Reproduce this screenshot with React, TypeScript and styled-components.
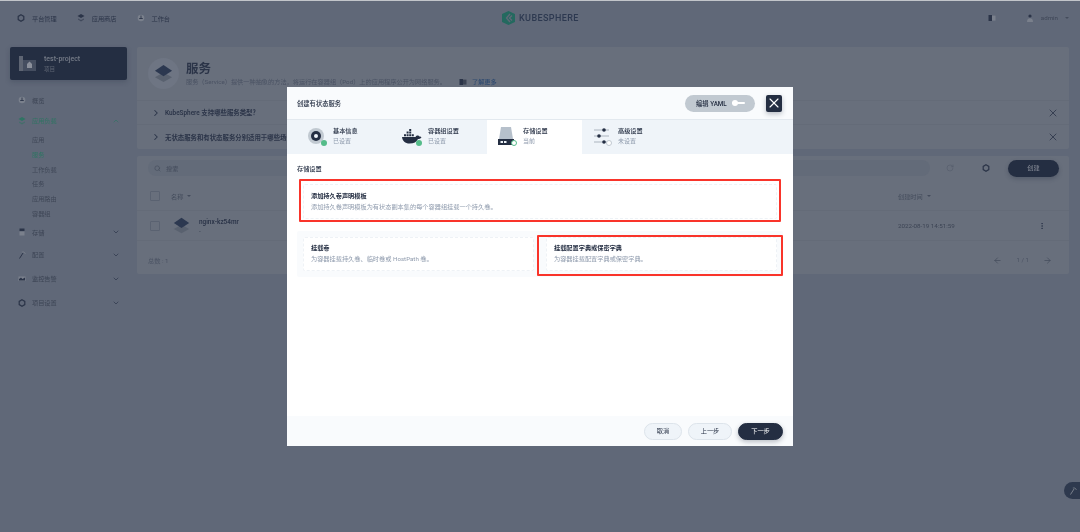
import React from 'react';
import styled, { createGlobalStyle } from 'styled-components';
import { ChevronDown, ChevronRight, ChevronUp, Search, RotateCw, X, ArrowLeft, ArrowRight, MoreVertical } from 'lucide-react';

const dimText = '#2b3448';
const navy = '#242e42';

const GlobalStyle = createGlobalStyle`
  html, body { margin: 0; padding: 0; }
  body {
    font-family: Roboto, "Noto Sans CJK SC", sans-serif;
    background: #606878;
    overflow: hidden;
  }
`;

const Page = styled.div`
  position: relative;
  width: 1080px;
  height: 532px;
  overflow: hidden;
  background: #606878;
  border-top: 1px solid #c2c5ca;
  box-sizing: border-box;
  filter: blur(0.4px);
`;

const TopBar = styled.div`
  display: flex;
  align-items: center;
  height: 36px;
  padding: 0 11px 2px 17px;
  box-sizing: border-box;
  font-size: 6.2px;
  color: ${dimText};
`;

const TopItem = styled.div<{ $gap?: number }>`
  display: flex;
  align-items: center;
  gap: 7px;
  margin-right: ${p => p.$gap ?? 20}px;
`;

const LogoBlock = styled.div`
  position: absolute;
  left: 502px;
  top: 10px;
  display: flex;
  align-items: center;
  gap: 4px;
  font-size: 9px;
  font-weight: 500;
  letter-spacing: 0.4px;
  color: #2d3950;
`;

const TopRight = styled.div`
  margin-left: auto;
  display: flex;
  align-items: center;
  color: #3f4757;
`;

const Layout = styled.div`
  display: flex;
  gap: 10px;
  padding: 10px 11px 0 10px;
`;

const Sidebar = styled.aside`
  width: 117px;
  flex: none;
`;

const ProjectCard = styled.div`
  display: flex;
  align-items: center;
  gap: 8px;
  height: 33px;
  padding-left: 9px;
  margin-bottom: 10px;
  background: ${navy};
  border-radius: 2px;
  box-shadow: 0 2px 5px rgba(36, 46, 66, 0.25);
`;

const ProjectName = styled.div`
  font-size: 7px;
  font-weight: 500;
  line-height: 10px;
  color: #767c88;
`;

const ProjectType = styled.div`
  font-size: 5.6px;
  line-height: 10px;
  color: #5e6573;
`;

const NavRow = styled.div<{ $active?: boolean; $height?: number }>`
  display: flex;
  align-items: center;
  gap: 6px;
  height: ${p => p.$height ?? 24}px;
  padding: 0 7px 0 8px;
  font-size: 6.2px;
  color: ${p => (p.$active ? '#2f7463' : '#3c4454')};
`;

const NavOpen = styled(ChevronDown)`
  margin-left: auto;
`;

const NavClose = styled(ChevronUp)`
  margin-left: auto;
`;

const SubNav = styled.div`
  display: flex;
  flex-direction: column;
  padding: 2px 0 0 22px;
`;

const SubItem = styled.div<{ $active?: boolean }>`
  height: 14.8px;
  line-height: 14.8px;
  font-size: 6.2px;
  color: ${p => (p.$active ? '#2f7463' : '#3f4757')};
`;

const Main = styled.main`
  flex: 1;
  display: flex;
  flex-direction: column;
  gap: 7px;
`;

const Card = styled.section`
  background: #686f7c;
  border-radius: 2px;
`;

const Banner = styled.div`
  display: flex;
  align-items: center;
  gap: 7px;
  height: 54px;
  padding-left: 11px;
  border-bottom: 1px solid #646b78;
  box-sizing: border-box;
`;

const BannerCircle = styled.div`
  display: flex;
  align-items: center;
  justify-content: center;
  width: 31px;
  height: 31px;
  border-radius: 50%;
  background: #6e7583;
`;

const BannerTitle = styled.h1`
  margin: 0 0 2px;
  font-size: 12.5px;
  line-height: 15px;
  font-weight: 600;
  color: ${dimText};
`;

const BannerText = styled.div`
  display: flex;
  align-items: center;
  font-size: 6.2px;
  line-height: 8px;
  color: #4a5263;
`;

const MoreLink = styled.span`
  margin-left: 13px;
  display: flex;
  align-items: center;
  gap: 5px;
  color: #2f4a70;
  font-weight: 500;
`;

const TipRow = styled.div`
  display: flex;
  align-items: center;
  height: 24px;
  padding: 0 10px 0 14px;
  gap: 4px;
  border-bottom: 1px solid #646b78;
  box-sizing: border-box;
  font-size: 6.4px;
  font-weight: 600;
  color: ${dimText};

  &:last-child { border-bottom: none; }
`;

const TipClose = styled(X)`
  margin-left: auto;
`;

const Toolbar = styled.div`
  display: flex;
  align-items: flex-start;
  height: 26px;
  padding: 4px 10px 0 11px;
  box-sizing: border-box;
`;

const SearchBox = styled.div`
  flex: 1;
  display: flex;
  align-items: center;
  gap: 5px;
  height: 16px;
  padding-left: 6px;
  margin-right: 16px;
  border-radius: 8px;
  background: #636b79;
  font-size: 6.2px;
  color: #444c5c;
`;

const ToolIcon = styled.div<{ $gap: number }>`
  display: flex;
  margin: 4px ${p => p.$gap}px 0 0;
`;

const CreateButton = styled.div`
  width: 51px;
  height: 17px;
  line-height: 17px;
  border-radius: 9px;
  text-align: center;
  background: ${navy};
  color: #8c919c;
  font-size: 6.2px;
  box-shadow: 0 2px 4px rgba(36, 46, 66, 0.3);
`;

const TableRow = styled.div<{ $height: number; $head?: boolean }>`
  display: grid;
  grid-template-columns: 21px 1fr 140px 31px;
  align-items: center;
  height: ${p => p.$height}px;
  padding-left: 13px;
  border-bottom: 1px solid #646b78;
  box-sizing: border-box;
  font-size: 6.2px;
  color: ${p => (p.$head ? '#444c5c' : '#3c4454')};
`;

const Check = styled.div`
  width: 8px;
  height: 8px;
  border: 1px solid #5a6271;
  border-radius: 1px;
`;

const SortCell = styled.div`
  display: flex;
  align-items: center;
  gap: 4px;
`;

const Caret = styled.span`
  width: 0;
  height: 0;
  border: 2px solid transparent;
  border-top: 2.5px solid #444c5c;
  border-bottom: none;
`;

const NameCell = styled.div`
  display: flex;
  align-items: center;
  gap: 9px;
  margin-left: 2px;
`;

const RowName = styled.div`
  font-weight: 600;
  font-size: 6.4px;
  line-height: 10px;
  color: ${dimText};
`;

const TableFoot = styled.div`
  display: flex;
  align-items: center;
  justify-content: space-between;
  height: 33px;
  padding: 5px 17px 0 11px;
  box-sizing: border-box;
  font-size: 6.2px;
  color: #4a5263;
`;

const Pager = styled.div`
  display: flex;
  align-items: center;
  gap: 14px;
`;

const Modal = styled.div`
  position: absolute;
  left: 287px;
  top: 86px;
  width: 506px;
  height: 359px;
  display: flex;
  flex-direction: column;
  background: #fff;
  border-radius: 2px;
`;

const ModalHead = styled.div`
  display: flex;
  align-items: center;
  height: 33px;
  padding: 0 11px 0 10px;
  background: #f9fbfd;
  border-bottom: 1px solid #e3e9ef;
  box-sizing: border-box;
  font-size: 6.3px;
  font-weight: 500;
  color: ${navy};
`;

const YamlToggle = styled.div`
  margin-left: auto;
  display: flex;
  align-items: center;
  gap: 3px;
  width: 70px;
  height: 17px;
  padding-left: 11px;
  margin-right: 11px;
  box-sizing: border-box;
  border-radius: 9px;
  background: #c1c9d1;
  font-size: 6.3px;
  color: ${navy};
`;

const ToggleKnob = styled.span`
  position: relative;
  width: 13px;
  height: 2px;
  margin-left: 2px;
  background: #fff;
  border-radius: 1px;

  &::before {
    content: '';
    position: absolute;
    left: 0;
    top: -2px;
    width: 6px;
    height: 6px;
    border-radius: 50%;
    background: #fff;
  }
`;

const CloseButton = styled.div`
  display: flex;
  align-items: center;
  justify-content: center;
  width: 16px;
  height: 17px;
  background: ${navy};
  border-radius: 2px;
  box-shadow: 0 2px 5px rgba(36, 46, 66, 0.3);
`;

const Tabs = styled.div`
  display: flex;
  height: 34px;
  padding-left: 10px;
  background: #eff4f9;
`;

const Tab = styled.div<{ $active?: boolean }>`
  display: flex;
  align-items: center;
  gap: 6px;
  width: 95px;
  padding: 0 0 2px 10px;
  box-sizing: border-box;
  background: ${p => (p.$active ? '#fff' : 'transparent')};
`;

const TabIcon = styled.div`
  position: relative;
  width: 20px;
  height: 20px;
  flex: none;
  margin-top: 2px;
`;

const StatusDot = styled.span<{ $state: 'done' | 'current' | 'todo' }>`
  position: absolute;
  right: 0;
  bottom: 1px;
  width: 6px;
  height: 6px;
  box-sizing: border-box;
  border-radius: 50%;
  background: ${p => (p.$state === 'done' ? '#55bc8a' : '#fff')};
  border: ${p =>
    p.$state === 'done' ? '0' : p.$state === 'current' ? '1px solid #55bc8a' : '1px solid #c1c9d1'};
`;

const TabTitle = styled.div`
  font-size: 6.2px;
  line-height: 10px;
  font-weight: 500;
  color: ${navy};
`;

const TabSub = styled.div`
  font-size: 6px;
  line-height: 10px;
  color: #8f9bad;
`;

const ModalBody = styled.div`
  flex: 1;
  padding: 11px 10px 0;
`;

const SectionTitle = styled.div`
  font-size: 6.2px;
  line-height: 8px;
  font-weight: 500;
  color: ${navy};
  margin-bottom: 11px;
`;

const RedMark = styled.div<{ $inset: string }>`
  position: relative;

  &::after {
    content: '';
    position: absolute;
    inset: ${p => p.$inset};
    border: 2px solid #f9342a;
    border-radius: 1px;
  }
`;

const OptionCard = styled.div<{ $height: number }>`
  display: flex;
  flex-direction: column;
  justify-content: center;
  height: ${p => p.$height}px;
  padding-left: 7px;
  box-sizing: border-box;
  background: #fff;
  border: 1px dashed #eef2f6;
  border-radius: 2px;
`;

const OptionTitle = styled.div`
  font-size: 6.2px;
  line-height: 10.7px;
  font-weight: 600;
  color: ${navy};
`;

const OptionText = styled.div`
  font-size: 6.2px;
  line-height: 10.7px;
  color: #8f9bad;
`;

const FirstOption = styled.div`
  margin: 0 6px;
`;

const OptionGroup = styled.div`
  display: grid;
  grid-template-columns: 1fr 1fr;
  gap: 12px;
  margin-top: 12px;
  padding: 6px;
  background: #f9fbfd;
  border-radius: 2px;
`;

const ModalFoot = styled.div`
  display: flex;
  justify-content: flex-end;
  align-items: center;
  gap: 6px;
  height: 30px;
  padding-right: 10px;
  background: #f9fbfd;
`;

const FootButton = styled.div<{ $width: number; $primary?: boolean }>`
  width: ${p => p.$width}px;
  height: 17px;
  line-height: 15px;
  box-sizing: border-box;
  border-radius: 9px;
  text-align: center;
  font-size: 6.2px;
  color: ${p => (p.$primary ? '#fff' : navy)};
  background: ${p => (p.$primary ? navy : '#eff4f9')};
  border: 1px solid ${p => (p.$primary ? navy : '#dde4eb')};
  box-shadow: ${p => (p.$primary ? '0 2px 5px rgba(36, 46, 66, 0.3)' : 'none')};
`;

const FloatTool = styled.div`
  position: absolute;
  right: -1px;
  top: 481px;
  width: 17px;
  height: 17px;
  display: flex;
  align-items: center;
  justify-content: center;
  border-radius: 9px 0 0 9px;
  background: #2e394e;
`;

const Stack = ({ size = 20 }: { size?: number }) => (
  <svg width={size} height={size} viewBox="0 0 20 20">
    <path d="M10 9 L19 14 L10 19 L1 14 Z" fill="#59616f" />
    <path d="M10 1 L19 7 L10 13 L1 7 Z" fill="#2c3850" />
  </svg>
);

const SmallStack = ({ color }: { color: string }) => (
  <svg width="8" height="8" viewBox="0 0 8 8">
    <path d="M4 0 L7.5 2 L4 4 L.5 2 Z" fill={color} />
    <path d="M1 4.4 L4 6 L7 4.4 V5.6 L4 7.4 L1 5.6 Z" fill={color} opacity=".6" />
  </svg>
);

const Compass = () => (
  <svg width="8" height="8" viewBox="0 0 8 8">
    <circle cx="4" cy="4" r="3.3" fill="#7a808c" />
    <path d="M4 1.5 V4.5 M2.2 4.5 H5.8" stroke="#2b3448" strokeWidth=".9" />
  </svg>
);

const Ring = () => (
  <svg width="8" height="8" viewBox="0 0 8 8">
    <path d="M4 .8 L6.8 2.4 V5.6 L4 7.2 L1.2 5.6 V2.4 Z" fill="none" stroke={dimText} strokeWidth="1.2" />
  </svg>
);

const Book = ({ tone = '#7a808c' }: { tone?: string }) => (
  <svg width="8" height="8" viewBox="0 0 8 8">
    <path d="M.5 1 H4 V7 H.5 Z" fill={dimText} />
    <path d="M4 1.6 H7.5 V6.6 H4 Z" fill={tone} />
  </svg>
);

const UserMark = () => (
  <svg width="8" height="8" viewBox="0 0 8 8">
    <circle cx="4" cy="2" r="1.6" fill={dimText} />
    <path d="M1 8 C1 5 2.5 4.2 4 4.2 C5.5 4.2 7 5 7 8 Z" fill="#7a808c" />
  </svg>
);

const Storage = () => (
  <svg width="8" height="8" viewBox="0 0 8 8">
    <path d="M1.5 .5 H6.5 V3 H1.5 Z" fill={dimText} />
    <path d="M1.5 3.6 H6.5 V7.5 H1.5 Z" fill="#7a808c" />
  </svg>
);

const Tool = ({ color = dimText }: { color?: string }) => (
  <svg width="8" height="8" viewBox="0 0 8 8">
    <path d="M1.5 7.5 L5 2" stroke={color} strokeWidth="1" fill="none" />
    <path d="M3.8 1 H6 L7.5 3" stroke="#7a808c" strokeWidth=".8" fill="none" />
  </svg>
);

const Monitor = () => (
  <svg width="8" height="8" viewBox="0 0 8 8">
    <path d="M.5 1.5 H7.5 V6 H.5 Z" fill="#7a808c" />
    <path d="M1 4 L3 2.5 L4.5 4 L7 2.5 V5.5 H1 Z" fill={dimText} />
  </svg>
);

const Logo = () => (
  <svg width="13" height="14" viewBox="0 0 13 14">
    <path d="M6.5 0 L13 3 V11 L6.5 14 L0 11 V3 Z" fill="#24695f" />
    <path d="M8 3 L4.5 7 L8 11 M10 4.5 L7.5 7 L10 9.5" stroke="#606878" strokeWidth="1.4" fill="none" />
  </svg>
);

const ProjectIcon = () => (
  <svg width="17" height="17" viewBox="0 0 17 17">
    <path d="M0 1 H4 V16 H0 Z" fill="#5e6573" />
    <path d="M4 5 H17 V16 H4 Z" fill="#454e60" />
    <path d="M8 13 V9 L10.5 6.5 L13 9 V13 Z" fill="#8b909b" />
  </svg>
);

const DiskIcon = () => (
  <svg width="20" height="20" viewBox="0 0 20 20">
    <circle cx="9" cy="9" r="8" fill="#c1c9d1" />
    <circle cx="9" cy="9" r="5" fill="#242e42" />
    <circle cx="9" cy="9" r="2" fill="#eff4f9" />
  </svg>
);

const DockerIcon = () => (
  <svg width="20" height="20" viewBox="0 0 20 20">
    <path d="M0 10 H13.5 C14 8.5 15 8.5 15.5 8.5 C16.5 8.5 17 9 17.5 9.5 C18.5 9.5 19 9.8 19.5 10.2 C18.5 11.8 17 12 16 12 C14.5 15 12 16.5 7.5 16.5 C3 16.5 0.5 14 0 10 Z" fill="#242e42" />
    <path d="M2 7.2 H4 V9.2 H2 Z M4.6 7.2 H6.6 V9.2 H4.6 Z M7.2 7.2 H9.2 V9.2 H7.2 Z M9.8 7.2 H11.8 V9.2 H9.8 Z M4.6 4.6 H6.6 V6.6 H4.6 Z M7.2 4.6 H9.2 V6.6 H7.2 Z M7.2 2 H9.2 V4 H7.2 Z" fill="#242e42" />
  </svg>
);

const DriveIcon = () => (
  <svg width="20" height="20" viewBox="0 0 20 20">
    <path d="M4 0 H14 L16 12 H2 Z" fill="#b6c0cb" />
    <path d="M1 12 H17 V18 H1 Z" fill="#242e42" />
    <path d="M3.5 14 H6 V16 H3.5 Z M7 14 H9.5 V16 H7 Z" fill="#eff4f9" />
  </svg>
);

const SlidersIcon = () => (
  <svg width="20" height="20" viewBox="0 0 20 20">
    <path d="M2 3 H17 M2 9 H17 M2 15 H17" stroke="#abb4be" strokeWidth="1" />
    <circle cx="12" cy="3" r="1.8" fill="#242e42" />
    <circle cx="7" cy="9" r="1.8" fill="#242e42" />
    <circle cx="12" cy="15" r="1.8" fill="#242e42" />
  </svg>
);

const steps = [
  { title: '基本信息', sub: '已设置', icon: <DiskIcon />, state: 'done' as const },
  { title: '容器组设置', sub: '已设置', icon: <DockerIcon />, state: 'done' as const },
  { title: '存储设置', sub: '当前', icon: <DriveIcon />, state: 'current' as const },
  { title: '高级设置', sub: '未设置', icon: <SlidersIcon />, state: 'todo' as const },
];

const subItems = ['应用', '服务', '工作负载', '任务', '应用路由', '容器组'];

export default function App() {
  return (
    <Page>
      <GlobalStyle />
      <TopBar>
        <TopItem><Ring />平台管理</TopItem>
        <TopItem><SmallStack color={dimText} />应用商店</TopItem>
        <TopItem><Compass />工作台</TopItem>
        <LogoBlock><Logo />KUBESPHERE</LogoBlock>
        <TopRight>
          <TopItem $gap={30}><Book /></TopItem>
          <TopItem $gap={7}><UserMark />admin</TopItem>
          <Caret />
        </TopRight>
      </TopBar>
      <Layout>
        <Sidebar>
          <ProjectCard>
            <ProjectIcon />
            <div>
              <ProjectName>test-project</ProjectName>
              <ProjectType>项目</ProjectType>
            </div>
          </ProjectCard>
          <NavRow $height={20}><Compass />概览</NavRow>
          <NavRow $height={21} $active><SmallStack color="#2f7463" />应用负载<NavClose size={8} color="#2f7463" /></NavRow>
          <SubNav>
            {subItems.map(item => (
              <SubItem key={item} $active={item === '服务'}>{item}</SubItem>
            ))}
          </SubNav>
          <NavRow $height={21}><Storage />存储<NavOpen size={8} color={dimText} /></NavRow>
          <NavRow><Tool />配置<NavOpen size={8} color={dimText} /></NavRow>
          <NavRow><Monitor />监控告警<NavOpen size={8} color={dimText} /></NavRow>
          <NavRow><Ring />项目设置<NavOpen size={8} color={dimText} /></NavRow>
        </Sidebar>
        <Main>
          <Card>
            <Banner>
              <BannerCircle><Stack size={19} /></BannerCircle>
              <div>
                <BannerTitle>服务</BannerTitle>
                <BannerText>
                  服务（Service）提供一种抽象的方法，将运行在容器组（Pod）上的应用程序公开为网络服务。
                  <MoreLink><Book tone="#3c4454" />了解更多</MoreLink>
                </BannerText>
              </div>
            </Banner>
            <TipRow><ChevronRight size={10} color={dimText} strokeWidth={2.5} />KubeSphere 支持哪些服务类型？<TipClose size={12} color={dimText} strokeWidth={1.6} /></TipRow>
            <TipRow><ChevronRight size={10} color={dimText} strokeWidth={2.5} />无状态服务和有状态服务分别适用于哪些场景？<TipClose size={12} color={dimText} strokeWidth={1.6} /></TipRow>
          </Card>
          <Card>
            <Toolbar>
              <SearchBox><Search size={7} color="#444c5c" />搜索</SearchBox>
              <ToolIcon $gap={28}><RotateCw size={8} color="#565e6d" /></ToolIcon>
              <ToolIcon $gap={18}><Ring /></ToolIcon>
              <CreateButton>创建</CreateButton>
            </Toolbar>
            <TableRow $height={29} $head>
              <Check />
              <SortCell>名称<Caret /></SortCell>
              <SortCell>创建时间<Caret /></SortCell>
              <span />
            </TableRow>
            <TableRow $height={30}>
              <Check />
              <NameCell>
                <Stack size={17} />
                <div>
                  <RowName>nginx-kz54mr</RowName>
                  <div>-</div>
                </div>
              </NameCell>
              <span>2022-08-19 14:51:59</span>
              <MoreVertical size={8} color={dimText} />
            </TableRow>
            <TableFoot>
              <span>总数 : 1</span>
              <Pager>
                <ArrowLeft size={9} color="#444c5c" />
                <span>1 / 1</span>
                <ArrowRight size={9} color="#444c5c" />
              </Pager>
            </TableFoot>
          </Card>
        </Main>
      </Layout>

      <Modal>
        <ModalHead>
          创建有状态服务
          <YamlToggle>编辑 YAML<ToggleKnob /></YamlToggle>
          <CloseButton><X size={16} color="#fff" strokeWidth={1.7} /></CloseButton>
        </ModalHead>
        <Tabs>
          {steps.map(step => (
            <Tab key={step.title} $active={step.state === 'current'}>
              <TabIcon>{step.icon}<StatusDot $state={step.state} /></TabIcon>
              <div>
                <TabTitle>{step.title}</TabTitle>
                <TabSub>{step.sub}</TabSub>
              </div>
            </Tab>
          ))}
        </Tabs>
        <ModalBody>
          <SectionTitle>存储设置</SectionTitle>
          <FirstOption>
            <RedMark $inset="-5px -4px -3px -4px">
              <OptionCard $height={35}>
                <OptionTitle>添加持久卷声明模板</OptionTitle>
                <OptionText>添加持久卷声明模板为有状态副本集的每个容器组挂载一个持久卷。</OptionText>
              </OptionCard>
            </RedMark>
          </FirstOption>
          <OptionGroup>
            <OptionCard $height={34}>
              <OptionTitle>挂载卷</OptionTitle>
              <OptionText>为容器挂载持久卷、临时卷或 HostPath 卷。</OptionText>
            </OptionCard>
            <RedMark $inset="-2px -6px -5px -9px">
              <OptionCard $height={34}>
                <OptionTitle>挂载配置字典或保密字典</OptionTitle>
                <OptionText>为容器挂载配置字典或保密字典。</OptionText>
              </OptionCard>
            </RedMark>
          </OptionGroup>
        </ModalBody>
        <ModalFoot>
          <FootButton $width={38}>取消</FootButton>
          <FootButton $width={44}>上一步</FootButton>
          <FootButton $width={45} $primary>下一步</FootButton>
        </ModalFoot>
      </Modal>
      <FloatTool><Tool color="#7a808c" /></FloatTool>
    </Page>
  );
}
